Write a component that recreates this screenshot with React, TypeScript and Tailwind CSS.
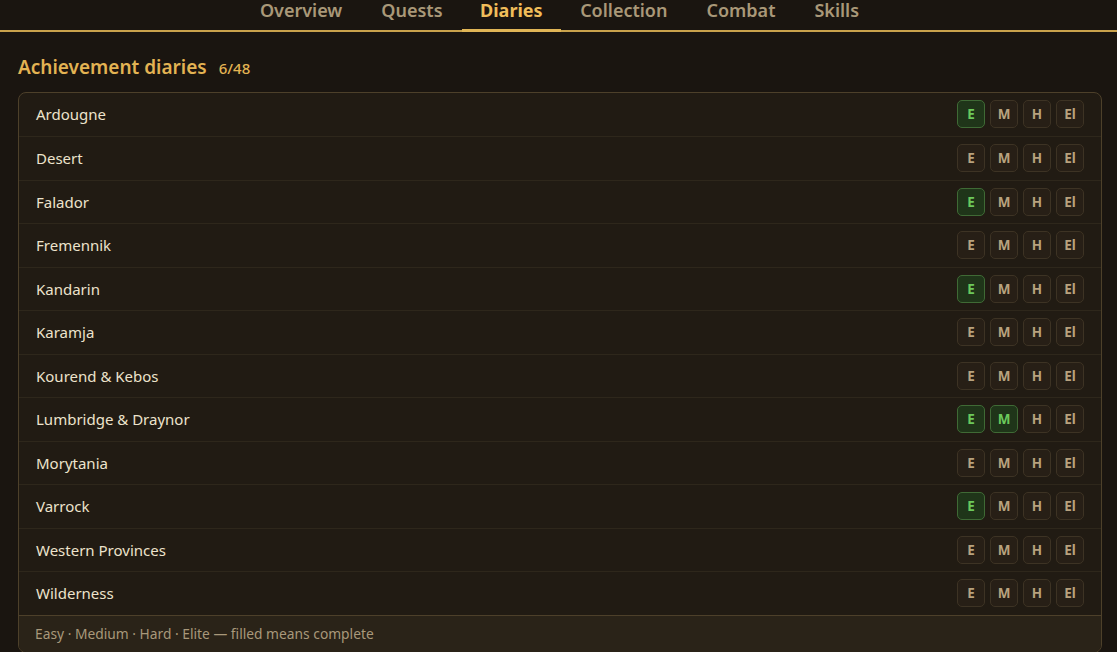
import React from 'react';

const tabs = ['Overview', 'Quests', 'Diaries', 'Collection', 'Combat', 'Skills'];

type Diary = { name: string; done: boolean[] };

const diaries: Diary[] = [
  { name: 'Ardougne', done: [true, false, false, false] },
  { name: 'Desert', done: [false, false, false, false] },
  { name: 'Falador', done: [true, false, false, false] },
  { name: 'Fremennik', done: [false, false, false, false] },
  { name: 'Kandarin', done: [true, false, false, false] },
  { name: 'Karamja', done: [false, false, false, false] },
  { name: 'Kourend & Kebos', done: [false, false, false, false] },
  { name: 'Lumbridge & Draynor', done: [true, true, false, false] },
  { name: 'Morytania', done: [false, false, false, false] },
  { name: 'Varrock', done: [true, false, false, false] },
  { name: 'Western Provinces', done: [false, false, false, false] },
  { name: 'Wilderness', done: [false, false, false, false] },
];

const tiers = ['E', 'M', 'H', 'El'];

function TierBadge({ label, done }: { label: string; done: boolean }) {
  return (
    <span
      className={
        done
          ? 'flex h-[28px] w-[28px] items-center justify-center rounded-[5px] border border-[#3f6a35] bg-[#1f3519] text-[13.5px] font-bold text-[#6cc95c]'
          : 'flex h-[28px] w-[28px] items-center justify-center rounded-[5px] border border-[#3d3324] bg-[#271f16] text-[13.5px] font-bold text-[#b8a27e]'
      }
    >
      {label}
    </span>
  );
}

export default function App() {
  const completed = diaries.reduce((n, d) => n + d.done.filter(Boolean).length, 0);

  return (
    <div className="h-[652px] w-full overflow-hidden bg-[#1a1510] font-['Noto_Sans',sans-serif]">
      {/* tab bar */}
      <nav className="flex justify-center border-b-2 border-[#c9a24c] pl-[2px]">
        {tabs.map((t) => (
          <div
            key={t}
            className={
              t === 'Diaries'
                ? '-mb-[2px] border-b-[3px] border-[#e0b556] px-[18px] pb-[9px] text-[18px] font-bold leading-[20px] text-[#f0bd5a]'
                : 'px-[19.5px] pb-[10px] text-[18px] font-semibold leading-[20px] text-[#a99878]'
            }
          >
            {t}
          </div>
        ))}
      </nav>

      <div className="pl-[18px] pr-[15px] pt-[21px]">
        <div className="flex items-baseline gap-[12px] pb-[10px]">
          <h2 className="text-[19px] font-semibold text-[#e3b353]">Achievement diaries</h2>
          <span className="text-[15px] font-medium text-[#e3b353]">
            {completed}/{diaries.length * 4}
          </span>
        </div>

        <div className="overflow-hidden rounded-[8px] border border-[#4d402a] bg-[#211b13]">
          {diaries.map((d, i) => (
            <div
              key={d.name}
              className={
                'flex h-[43.5px] items-center justify-between pl-[17px] pr-[17px] ' +
                (i > 0 ? 'border-t border-[#2e271b]' : '')
              }
            >
              <span className="text-[15px] text-[#ede3cc]">{d.name}</span>
              <div className="flex gap-[5px]">
                {tiers.map((t, j) => (
                  <TierBadge key={t} label={t} done={d.done[j]} />
                ))}
              </div>
            </div>
          ))}
          <div className="border-t border-[#4d402a] bg-[#2a2318] px-[16px] py-[8px] text-[13.8px] text-[#a8987a]">
            Easy · Medium · Hard · Elite — filled means complete
          </div>
        </div>
      </div>
    </div>
  );
}
